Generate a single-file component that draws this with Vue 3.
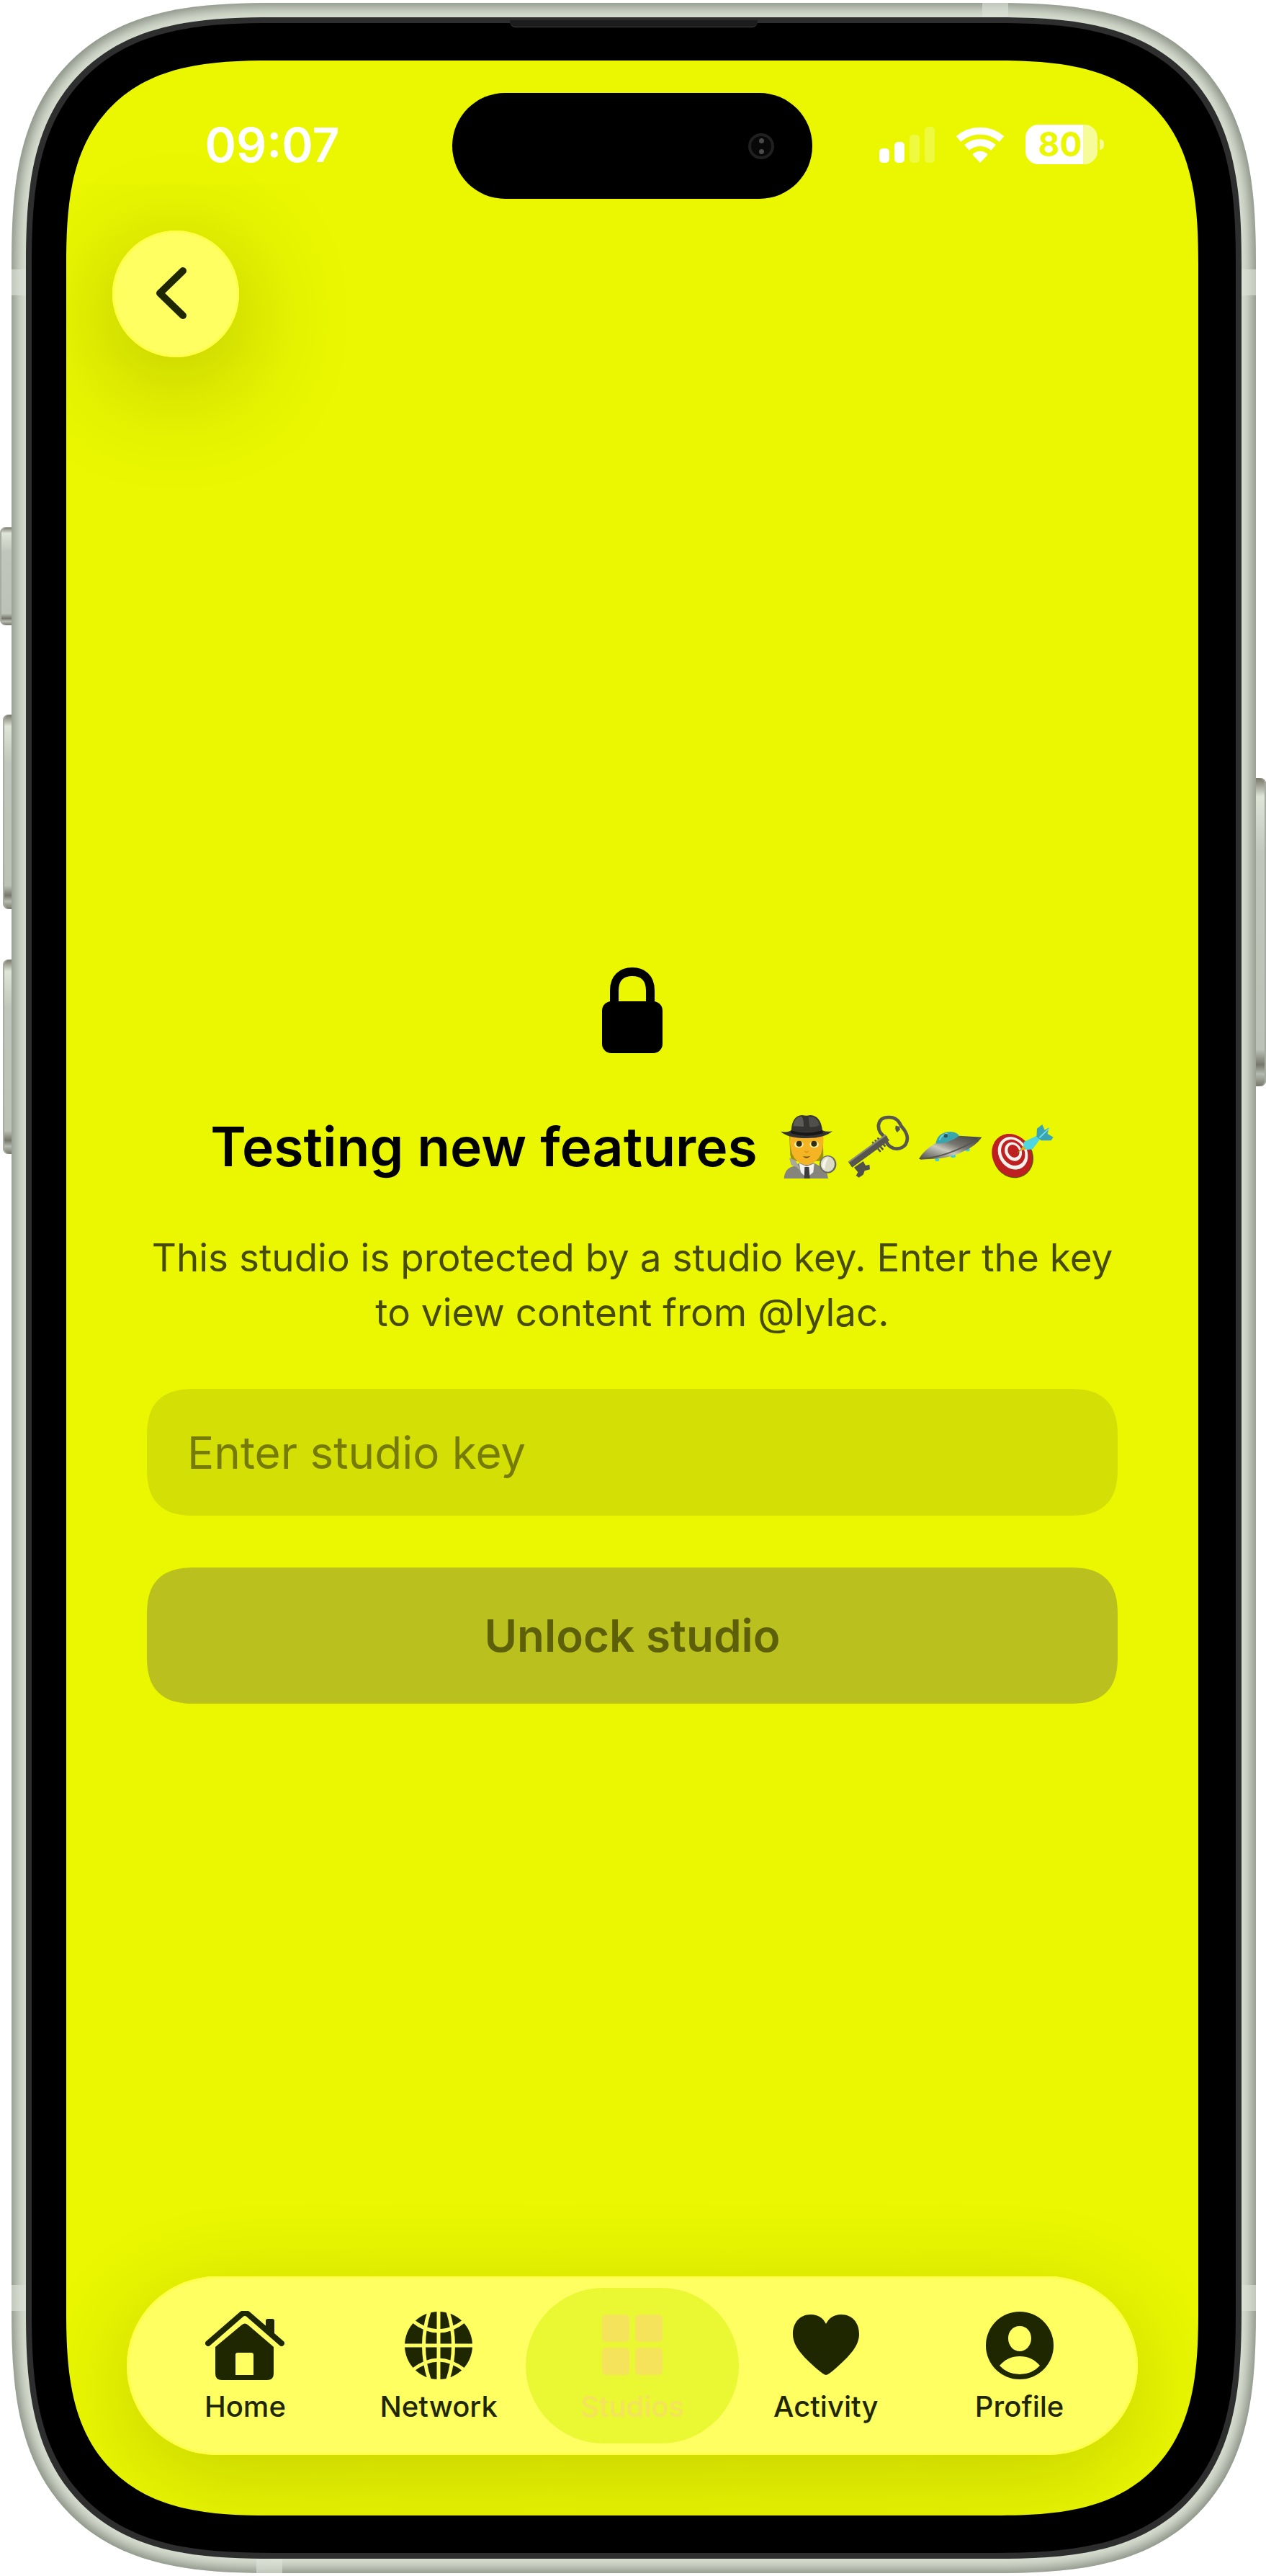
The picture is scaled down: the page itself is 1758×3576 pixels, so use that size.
<script setup>
import { ref } from 'vue'

const studioKey = ref('')
const active = ref('Studios')
const tabs = ['Home', 'Network', 'Studios', 'Activity', 'Profile']
const bars = [20, 29, 39, 50]
</script>

<template>
  <div class="page">
    <span class="key action"></span>
    <span class="key volume-up"></span>
    <span class="key volume-down"></span>
    <span class="key power"></span>
    <div class="frame">
      <span class="band side upper"></span>
      <span class="band side lower"></span>
      <span class="band cap top"></span>
      <span class="band cap bottom"></span>
      <div class="rim">
        <span class="speaker"></span>
        <div class="glass">
          <div class="screen">
            <header class="status">
              <time class="clock">09:07</time>
              <div class="island"><span class="camera"><i></i><i></i></span></div>
              <div class="indicators">
                <div class="signal">
                  <span v-for="(h, i) in bars" :key="h" :class="{ dim: i > 1 }" :style="{ height: h + 'px' }"></span>
                </div>
                <svg class="wifi" viewBox="0 0 68 50" aria-label="Wi-Fi">
                  <path d="M4 17A46 46 0 0 1 64 17" />
                  <path d="M15.500 29A28 28 0 0 1 52.500 29" />
                  <path class="dot" d="M34 50 24 39.500Q23 38 24.500 37Q34 30.500 43.500 37Q45 38 44 39.500Z" />
                </svg>
                <div class="battery"><span class="level">80</span></div>
              </div>
            </header>

            <div class="toolbar">
              <button class="back" type="button" aria-label="Back">
                <svg viewBox="0 0 176 176"><path d="M98 56 66 87 98 118" /></svg>
              </button>
            </div>

            <main class="content">
              <form class="gate" @submit.prevent>
                <svg class="lock" viewBox="0 0 84 120">
                  <path d="M17 52V32C17 14 28 6 42 6S67 14 67 32V52" fill="none" stroke="#000" stroke-width="12" />
                  <rect y="47" width="84" height="72" rx="13" />
                </svg>
                <h1 class="title">
                  <span>Testing new features</span>
                  <span class="emojis">
                    <svg viewBox="36 84 264 264" role="img" aria-label="Detective">
                      <path d="M96 165H236L238 255 226 275H106L100 250Z" fill="#9c9300" />
                      <path d="M74 348Q78 305 112 298L140 283H198L226 298Q254 310 258 348Z" fill="#85857c" />
                      <path d="M96 262 122 272 148 320 126 300 104 292Z" fill="#a9a99c" />
                      <path d="M137 284 168 298 200 286 196 322 168 346 144 322Z" fill="#f2f2ee" />
                      <path d="M160 300H178L182 348H158Z" fill="#3c3d3c" />
                      <path d="M100 168H238Q242 230 218 264Q190 292 168 292T118 264Q94 230 100 168Z" fill="#f4b423" />
                      <ellipse cx="136" cy="206" rx="19" ry="14" fill="#f7f2a4" /><ellipse cx="200" cy="206" rx="19" ry="14" fill="#f7f2a4" />
                      <circle cx="137" cy="203" r="12" fill="#332d10" /><circle cx="199" cy="203" r="12" fill="#332d10" />
                      <path d="M160 235Q168 241 176 235" fill="none" stroke="#d78a08" stroke-width="4" />
                      <path d="M152 255Q168 259 184 254Q168 272 152 255Z" fill="#67520a" />
                      <path d="M60 152Q90 158 104 148Q108 86 150 84Q168 88 184 84Q228 88 234 148Q256 156 276 150Q246 180 168 180T60 152Z" fill="#353433" />
                      <path d="M112 130Q114 94 146 89Q156 92 156 132Z" fill="#5d5b56" /><path d="M176 92Q210 84 222 126Q200 137 180 132Z" fill="#504f4b" />
                      <path d="M103 148Q168 168 235 147L236 160Q168 180 102 160Z" fill="#171717" />
                      <ellipse cx="257" cy="289" rx="35" ry="37" fill="#66665c" /><ellipse cx="256" cy="288" rx="29" ry="32" fill="#dcdcc4" />
                      <path d="M232 300Q235 264 260 260Q246 278 244 310Z" fill="#f5f5ec" />
                    </svg>
                    <svg viewBox="336 84 264 264" role="img" aria-label="Key">
                      <g fill="none" stroke="#56564f">
                        <path d="M502 180Q464 158 468 124Q474 92 512 93Q540 92 555 116Q562 132 574 144Q598 178 580 207Q560 230 530 222Q505 214 498 188" stroke-width="14" />
                        <path d="M548 130Q544 142 552 150" stroke-width="18" />
                        <path d="M350 291 505 178" stroke-width="27" />
                        <path d="M444 198 474 234M455 190 485 226M466 181 494 212" stroke-width="8" stroke-linecap="round" />
                      </g>
                      <path d="M343 280 498 167" stroke="#8a8a80" stroke-width="6" />
                      <path d="M366 302 404 276 414 294 430 290 432 310 410 316 404 332 386 344 374 336 382 322Z" fill="#51514a" />
                    </svg>
                    <svg viewBox="636 84 264 264" role="img" aria-label="Flying saucer">
                      <defs><linearGradient id="hull" x1="0" y1="1" x2="1" y2="0"><stop offset="0" stop-color="#484841" /><stop offset=".4" stop-color="#c8c8bd" /><stop offset=".6" stop-color="#77776f" /><stop offset="1" stop-color="#3c3c36" /></linearGradient></defs>
                      <path d="M706 206Q710 156 766 153Q798 154 806 174L766 202Z" fill="#3ba5ae" />
                      <path d="M722 188Q728 166 754 160" fill="none" stroke="#76d5da" stroke-width="5" />
                      <circle cx="748" cy="170" r="8" fill="#2c5560" />
                      <g fill="#37cfe8"><ellipse cx="712" cy="270" rx="9" ry="6" /><ellipse cx="778" cy="254" rx="11" ry="7" /><ellipse cx="839" cy="228" rx="9" ry="7" /></g>
                      <path d="M636 267Q656 230 704 202Q752 206 806 170L898 176Q872 214 816 238Q748 272 636 267Z" fill="url(#hull)" />
                      <path d="M642 266Q750 262 890 180" fill="none" stroke="#55554e" stroke-width="6" />
                    </svg>
                    <svg viewBox="936 84 264 264" role="img" aria-label="Dart on a target">
                      <ellipse cx="1029" cy="258" rx="82" ry="90" fill="#5e5504" transform="rotate(-30 1029 258)" />
                      <g transform="rotate(-32 1024 252)">
                        <ellipse cx="1024" cy="252" rx="80" ry="94" fill="#be1f20" /><ellipse cx="1032" cy="246" rx="59" ry="71" fill="#f4f1ec" /><ellipse cx="1034" cy="244" rx="47" ry="57" fill="#be1f20" /><ellipse cx="1037" cy="241" rx="34" ry="41" fill="#f4f1ec" /><ellipse cx="1039" cy="240" rx="23" ry="28" fill="#be1f20" />
                      </g>
                      <path d="M1044 241 1078 215" stroke="#8a6d10" stroke-width="4" /><path d="M1058 232 1074 206 1090 226Z" fill="#d7b41c" />
                      <path d="M1073 196 1126 170 1141 184 1110 226 1084 229 1072 214Z" fill="#4fd7df" />
                      <path d="M1126 174 1128 140 1150 123 1160 146 1178 136 1172 162 1196 176 1186 190 1146 190Z" fill="#3ba4b4" />
                      <path d="M1138 178 1180 138" stroke="#7de4e8" stroke-width="5" />
                    </svg>
                  </span>
                </h1>
                <p class="hint">This studio is protected by a studio key. Enter the key to view content from @lylac.</p>
                <input v-model="studioKey" class="field" type="text" placeholder="Enter studio key" aria-label="Studio key" />
                <button class="unlock" type="submit" disabled>Unlock studio</button>
              </form>
            </main>

            <nav class="tabs">
              <button v-for="tab in tabs" :key="tab" type="button" class="tab" :class="{ active: tab === active }" @click="active = tab">
                <svg v-if="tab === 'Home'" class="glyph" viewBox="0 0 110 96">
                  <path d="M4 45 50 5Q55 1 60 5L106 45" fill="none" stroke="currentColor" stroke-width="8" stroke-linecap="round" />
                  <path d="M84 30V14Q84 11 87 11H93Q96 11 96 14V40Z" />
                  <path fill-rule="evenodd" d="M14 50 50 20Q55 15 60 20L95 50V87Q95 96 86 96H23Q14 96 14 87ZM45 58Q42 58 42 61V89H67V61Q67 58 64 58Z" />
                </svg>
                <svg v-else-if="tab === 'Network'" class="glyph" viewBox="-47 -48 94 96">
                  <circle r="47" />
                  <g class="grid">
                    <path d="M-50 0H50M0-50V50" />
                    <path d="M-12-50Q-29 0-12 50M12-50Q29 0 12 50" />
                    <path d="M-37-35Q0-5 37-35M-37 35Q0 5 37 35" />
                  </g>
                </svg>
                <svg v-else-if="tab === 'Studios'" class="glyph" viewBox="0 0 84 84">
                  <rect width="38" height="38" rx="6" /><rect x="46" width="38" height="38" rx="6" />
                  <rect y="46" width="38" height="38" rx="6" /><rect x="46" y="46" width="38" height="38" rx="6" />
                </svg>
                <svg v-else-if="tab === 'Activity'" class="glyph" viewBox="0 0 92 84">
                  <path d="M46 84Q42 83 34 76C12 57 0 43 0 27C0 11 10 0 25 0C35 0 42 5 46 13C50 5 57 0 67 0C82 0 92 11 92 27C92 43 80 57 58 76Q50 83 46 84Z" />
                </svg>
                <svg v-else class="glyph" viewBox="0 -1 94 96">
                  <path fill-rule="evenodd" d="M47 0A47 47 0 1 1 47 94A47 47 0 1 1 47 0ZM47 20C37 20 31 28 31 37C31 47 38 55 47 55S63 47 63 37C63 28 57 20 47 20ZM19 75Q30 62 47 62T75 75Q64 87 47 87T19 75Z" />
                </svg>
                <span class="label">{{ tab }}</span>
              </button>
            </nav>
          </div>
        </div>
      </div>
    </div>
  </div>
</template>

<style>
body {
  margin: 0;
  background: #fff;
}
</style>

<style scoped>
* {
  box-sizing: border-box;
}
.page {
  position: relative;
  display: flex;
  min-height: 100vh;
  padding: 4px 14px 4px 16px;
  font-family: Inter, "Noto Sans", sans-serif;
  color: #000;
}
button,
input {
  margin: 0;
  border: 0;
  font-family: inherit;
}
.frame,
.rim,
.glass,
.screen {
  display: flex;
  flex: 1;
  flex-direction: column;
  min-width: 0;
  corner-shape: superellipse(1.46);
}
.frame {
  position: relative;
  overflow: hidden;
  padding: 20px;
  border-radius: 366px;
  background: #d9e0d2;
  box-shadow: inset 0 0 18px 5px #7f857a;
}
.rim {
  position: relative;
  padding: 8px;
  border-radius: 344px;
  background: #2e2e2e;
}
.glass {
  padding: 52px 52px 52px 48px;
  border-radius: 336px;
  background: #000;
}
.screen {
  overflow: hidden;
  border-radius: 284px;
  background: #eaf700;
}
.band {
  position: absolute;
  background: rgba(221, 227, 217, 0.6);
}
.side {
  left: 0;
  right: 0;
  height: 36px;
}
.upper {
  top: 370px;
}
.lower {
  bottom: 364px;
}
.cap {
  width: 36px;
  height: 20px;
}
.top {
  top: 0;
  right: 344px;
}
.bottom {
  bottom: 0;
  left: 340px;
}
.speaker {
  position: absolute;
  top: 4px;
  left: 50%;
  width: 344px;
  height: 10px;
  margin-left: -172px;
  border-bottom: 1px solid #444;
  border-radius: 0 0 8px 8px;
  background: #1c1c1c;
}
.key {
  position: absolute;
  left: 4px;
  width: 12px;
  height: 270px;
  border-radius: 8px 0 0 8px;
  background: linear-gradient(#777568, #dfe6d8 6%, #c0c6bb 25%, #bcc2b6 88%, #77766a 93%, #b5bbb0 96%, #77766a);
  box-shadow: inset 2px 0 1px #a7aca2;
}
.action {
  left: 0;
  top: 732px;
  width: 16px;
  height: 136px;
}
.volume-up {
  top: 992px;
}
.volume-down {
  top: 1332px;
}
.power {
  left: auto;
  right: 0;
  top: 1080px;
  width: 14px;
  height: 428px;
  border-radius: 0 8px 8px 0;
  box-shadow: inset -2px 0 1px #a7aca2;
}

.status {
  display: grid;
  grid-template-columns: 1fr 500px 1fr;
  align-items: center;
  padding-top: 45px;
  color: #fff;
}
.clock {
  padding: 0 0 4px 36px;
  font-size: 66px;
  font-weight: 600;
  line-height: 80px;
  text-align: center;
}
.island {
  display: flex;
  align-items: center;
  justify-content: flex-end;
  height: 147px;
  padding-right: 53px;
  border-radius: 74px;
  background: #000;
}
.camera {
  display: flex;
  flex-direction: column;
  align-items: center;
  justify-content: center;
  gap: 8px;
  width: 36px;
  height: 36px;
  border: 4px solid #202020;
  border-radius: 50%;
  background: #080808;
}
.camera i {
  width: 7px;
  height: 7px;
  border-radius: 50%;
  background: #4a4a4a;
}
.indicators {
  display: flex;
  align-items: center;
  justify-content: center;
  gap: 29px;
  padding: 0 48px 4px 0;
}
.signal {
  display: flex;
  align-items: flex-end;
  gap: 7px;
}
.signal span {
  width: 14px;
  border-radius: 5px;
  background: #fff;
}
.signal .dim {
  opacity: 0.25;
}
.wifi {
  width: 68px;
  height: 50px;
  overflow: visible;
  fill: none;
  stroke: #fff;
  stroke-width: 10;
}
.wifi .dot {
  fill: #fff;
  stroke: none;
}
.battery {
  position: relative;
  width: 100px;
  height: 55px;
  border-radius: 18px;
  background: linear-gradient(90deg, #fff 80%, rgba(255, 255, 255, 0.6) 80%);
  color: #eaf700;
}
.battery::after {
  content: "";
  position: absolute;
  top: 20px;
  left: 103px;
  width: 6px;
  height: 15px;
  border-radius: 0 6px 6px 0;
  background: rgba(255, 255, 255, 0.6);
}
.level {
  display: block;
  padding-left: 18px;
  font-size: 46px;
  font-weight: 700;
  line-height: 55px;
}

.toolbar {
  display: flex;
  padding: 44px 64px 0;
}
.back {
  width: 176px;
  height: 176px;
  padding: 0;
  border-radius: 50%;
  background: #ffff62;
  box-shadow: inset 0 0 0 3px #ffff48, 0 32px 160px rgba(0, 0, 0, 0.26);
}
.back svg {
  display: block;
  fill: none;
  stroke: #1f2700;
  stroke-width: 10;
  stroke-linecap: round;
  stroke-linejoin: round;
}
.content {
  display: flex;
  flex: 1;
  flex-direction: column;
  justify-content: center;
  padding: 52px 112px 0;
}
.gate {
  display: flex;
  flex-direction: column;
  align-items: center;
}
.lock {
  width: 84px;
  height: 120px;
}
.title {
  display: flex;
  align-items: center;
  justify-content: center;
  gap: 24px;
  margin: 81px 0 0;
  font-size: 75px;
  font-weight: 600;
  line-height: 96px;
  white-space: nowrap;
}
.emojis {
  display: flex;
  gap: 12px;
}
.emojis svg {
  width: 88px;
  height: 88px;
}
.hint {
  margin: 68px 0 0;
  color: #464b00;
  font-size: 53px;
  line-height: 76px;
  text-align: center;
}
.field {
  width: 100%;
  height: 176px;
  margin-top: 68px;
  padding: 0 56px;
  border-radius: 68px;
  corner-shape: superellipse(1.4);
  outline: 0;
  background: #d4df06;
  color: #000;
  font-size: 62px;
}
.field::placeholder {
  color: #757b04;
  opacity: 1;
}
.unlock {
  width: 100%;
  height: 189px;
  margin-top: 72px;
  border-radius: 68px;
  corner-shape: superellipse(1.4);
  background: #bac01e;
  color: #5d6008;
  font-size: 62px;
  font-weight: 600;
}

.tabs {
  display: flex;
  height: 248px;
  margin: 0 84px 84px;
  padding: 16px;
  border-radius: 124px;
  background: #ffff62;
  box-shadow: inset 0 0 0 3px #ffff48, 0 32px 140px rgba(0, 0, 0, 0.16);
}
.tab {
  display: flex;
  flex: 1;
  flex-direction: column;
  align-items: center;
  min-width: 0;
  padding: 32px 0 0;
  border-radius: 108px;
  background: none;
  color: #1f2700;
}
.tab + .tab {
  margin-left: -28px;
}
.active {
  background: #e9f832;
  color: #f5e35c;
}
.glyph {
  width: 110px;
  height: 96px;
  fill: currentColor;
}
.tab:nth-child(3) .glyph,
.tab:nth-child(4) .glyph {
  height: 84px;
  margin: 5px 0 7px;
}
.grid {
  fill: none;
  stroke: #ffff62;
  stroke-width: 5;
}
.label {
  margin-top: 13px;
  font-size: 40px;
  font-weight: 500;
  line-height: 48px;
}
</style>
